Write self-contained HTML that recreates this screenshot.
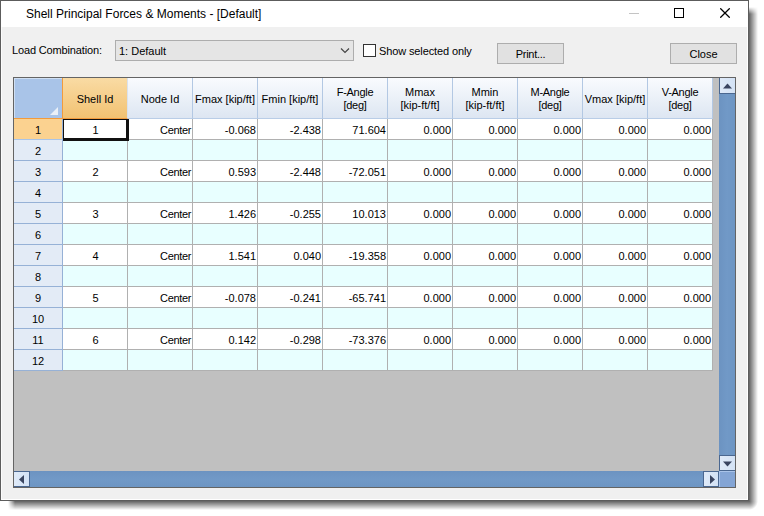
<!DOCTYPE html>
<html><head><meta charset="utf-8">
<style>
*{margin:0;padding:0;box-sizing:border-box}
html,body{width:764px;height:516px;overflow:hidden;background:#fff;font-family:"Liberation Sans",sans-serif;color:#000}
#win{position:absolute;left:0;top:0;width:749px;height:501px;border:1px solid #5c5c5c;background:#f0f0f0;box-shadow:inset 1px 0 0 #fbfbfb,inset -1px -1px 0 #fff;}
#title{position:absolute;left:0;top:0;width:747px;height:26px;background:#fff}
#title .tx{position:absolute;left:25px;top:6px;font-size:12px;line-height:14px;color:#000;white-space:nowrap}
.abs{position:absolute}
.lbl{position:absolute;font-size:11px;line-height:13px;white-space:nowrap}
.btn{position:absolute;border:1px solid #adadad;background:#e1e1e1;font-size:11px;line-height:21px;text-align:center}
#grid{position:absolute;left:13px;top:77px;width:723px;height:411px;border:1px solid #646464;background:#c0c0c0;overflow:hidden}
.g{position:absolute;left:-14px;top:-78px}
.hc{position:absolute;top:78px;width:65px;height:41px;background:linear-gradient(#f9fbfe,#dde6f2);border-right:1px solid #b3c8e3;border-bottom:1px solid #b9cde7;font-size:11px;text-align:center;white-space:nowrap}
.hc.sel{background:linear-gradient(#f9dba4,#f2c272);border-right:1px solid #d9e2ee;border-bottom:1px solid #f29b3c}
.t1{position:absolute;left:0;right:0;top:15px;line-height:13px}
.t2{position:absolute;left:0;right:0;top:8px;line-height:13px}
.corner{position:absolute;left:14px;top:78px;width:49px;height:41px;background:#a9c4e8;box-shadow:inset 1px 1px 0 #cfdff3;border-right:1px solid #f29b3c;border-bottom:1px solid #f29b3c}
.rh{position:absolute;left:14px;width:49px;height:21px;background:#e3ebf6;border-right:1px solid #96b1d6;border-bottom:1px solid #96b1d6;font-size:11px;line-height:22px;text-align:center}
.rh.sel{background:#fbd290;border-bottom-color:#a9c4e8}
.dc{position:absolute;width:65px;height:21px;border-right:1px solid #b0b0b0;border-bottom:1px solid #b0b0b0;font-size:11px;line-height:22px;white-space:nowrap;padding:0 1px 0 2px}
.odd{background:#fff}
.even{background:#e8ffff}
.c{text-align:center}
.r{text-align:right}
#selcell{position:absolute;left:63px;top:119px;width:66px;height:22px;border:1px solid #111;border-right-width:3px;border-bottom-width:3px}
.vsb{position:absolute;left:719px;top:78px;width:16px;height:393px;background:linear-gradient(90deg,#6c93c1,#7199c7 50%,#6d95c3)}
.hsb{position:absolute;left:14px;top:471px;width:705px;height:16px;background:linear-gradient(#6c93c1,#7199c7 50%,#6d95c3)}
.sb{position:absolute;background:linear-gradient(90deg,#dfeaf8,#d3e2f5);border:1px solid #4a6790}
.sbtn{position:absolute;width:15px;height:15px;background:linear-gradient(90deg,#e0ebf9,#c9dbf2);border:1px solid #4d6d9a}
</style></head><body>
<div class="abs" style="left:0;top:501px;width:749px;height:10px;background:linear-gradient(rgba(0,0,0,.62),rgba(0,0,0,0) 9px);-webkit-mask-image:linear-gradient(90deg,transparent 8px,#000 15px)"></div>
<div class="abs" style="left:749px;top:0;width:10px;height:501px;background:linear-gradient(90deg,rgba(0,0,0,.62),rgba(0,0,0,0) 9px);-webkit-mask-image:linear-gradient(transparent 7px,#000 14px)"></div>
<div class="abs" style="left:749px;top:501px;width:10px;height:10px;background:radial-gradient(circle at 0 0,rgba(0,0,0,.62),rgba(0,0,0,0) 9px)"></div>
<div id="win">
 <div id="title"><div class="tx">Shell Principal Forces &amp; Moments - [Default]</div>
  <div class="abs" style="left:628px;top:12px;width:10px;height:1px;background:#c4c4c4"></div>
  <div class="abs" style="left:673px;top:7px;width:10px;height:10px;border:1px solid #000"></div>
  <svg class="abs" style="left:719px;top:7px" width="10" height="10" viewBox="0 0 10 10"><path d="M0.3 0.3L9.7 9.7M9.7 0.3L0.3 9.7" stroke="#000" stroke-width="1.25"/></svg>
 </div>
</div>
<div class="lbl" style="left:12px;top:44px;letter-spacing:-0.15px">Load Combination:</div>
<div class="abs" style="left:115px;top:40px;width:239px;height:21px;border:1px solid #adadad;background:#e5e5e5"></div>
<div class="lbl" style="left:119px;top:45px">1: Default</div>
<svg class="abs" style="left:340px;top:47px" width="11" height="8" viewBox="0 0 11 8"><path d="M1 1.5L5 5.5L9 1.5" fill="none" stroke="#444" stroke-width="1.15"/></svg>
<div class="abs" style="left:363px;top:44px;width:13px;height:13px;border:1px solid #333;background:#fff"></div>
<div class="lbl" style="left:379px;top:45px;letter-spacing:-0.12px">Show selected only</div>
<div class="btn" style="left:497px;top:43px;width:67px;height:21px;letter-spacing:-0.3px">Print...</div>
<div class="btn" style="left:670px;top:43px;width:67px;height:21px">Close</div>
<div id="grid"><div class="g">
<div class="corner"><svg class="abs" style="left:35px;top:28px" width="10" height="10" viewBox="0 0 10 10"><path d="M9 1L9 9L1 9Z" fill="#eaf0f7"/></svg></div>
<div class="hc sel" style="left:63px"><div class="t1">Shell Id</div></div>
<div class="hc" style="left:128px"><div class="t1">Node Id</div></div>
<div class="hc" style="left:193px"><div class="t1">Fmax [kip/ft]</div></div>
<div class="hc" style="left:258px"><div class="t1">Fmin [kip/ft]</div></div>
<div class="hc" style="left:323px;letter-spacing:-0.3px"><div class="t2">F-Angle<br>[deg]</div></div>
<div class="hc" style="left:388px"><div class="t2">Mmax<br>[kip-ft/ft]</div></div>
<div class="hc" style="left:453px"><div class="t2">Mmin<br>[kip-ft/ft]</div></div>
<div class="hc" style="left:518px;letter-spacing:-0.3px"><div class="t2">M-Angle<br>[deg]</div></div>
<div class="hc" style="left:583px"><div class="t1">Vmax [kip/ft]</div></div>
<div class="hc" style="left:648px;letter-spacing:-0.3px"><div class="t2">V-Angle<br>[deg]</div></div>
<div class="rh sel" style="top:119px">1</div>
<div class="dc odd c" style="left:63px;top:119px">1</div>
<div class="dc odd r" style="left:128px;top:119px;letter-spacing:-0.35px">Center</div>
<div class="dc odd r" style="left:193px;top:119px">-0.068</div>
<div class="dc odd r" style="left:258px;top:119px">-2.438</div>
<div class="dc odd r" style="left:323px;top:119px">71.604</div>
<div class="dc odd r" style="left:388px;top:119px">0.000</div>
<div class="dc odd r" style="left:453px;top:119px">0.000</div>
<div class="dc odd r" style="left:518px;top:119px">0.000</div>
<div class="dc odd r" style="left:583px;top:119px">0.000</div>
<div class="dc odd r" style="left:648px;top:119px">0.000</div>
<div class="rh" style="top:140px">2</div>
<div class="dc even c" style="left:63px;top:140px"></div>
<div class="dc even r" style="left:128px;top:140px"></div>
<div class="dc even r" style="left:193px;top:140px"></div>
<div class="dc even r" style="left:258px;top:140px"></div>
<div class="dc even r" style="left:323px;top:140px"></div>
<div class="dc even r" style="left:388px;top:140px"></div>
<div class="dc even r" style="left:453px;top:140px"></div>
<div class="dc even r" style="left:518px;top:140px"></div>
<div class="dc even r" style="left:583px;top:140px"></div>
<div class="dc even r" style="left:648px;top:140px"></div>
<div class="rh" style="top:161px">3</div>
<div class="dc odd c" style="left:63px;top:161px">2</div>
<div class="dc odd r" style="left:128px;top:161px;letter-spacing:-0.35px">Center</div>
<div class="dc odd r" style="left:193px;top:161px">0.593</div>
<div class="dc odd r" style="left:258px;top:161px">-2.448</div>
<div class="dc odd r" style="left:323px;top:161px">-72.051</div>
<div class="dc odd r" style="left:388px;top:161px">0.000</div>
<div class="dc odd r" style="left:453px;top:161px">0.000</div>
<div class="dc odd r" style="left:518px;top:161px">0.000</div>
<div class="dc odd r" style="left:583px;top:161px">0.000</div>
<div class="dc odd r" style="left:648px;top:161px">0.000</div>
<div class="rh" style="top:182px">4</div>
<div class="dc even c" style="left:63px;top:182px"></div>
<div class="dc even r" style="left:128px;top:182px"></div>
<div class="dc even r" style="left:193px;top:182px"></div>
<div class="dc even r" style="left:258px;top:182px"></div>
<div class="dc even r" style="left:323px;top:182px"></div>
<div class="dc even r" style="left:388px;top:182px"></div>
<div class="dc even r" style="left:453px;top:182px"></div>
<div class="dc even r" style="left:518px;top:182px"></div>
<div class="dc even r" style="left:583px;top:182px"></div>
<div class="dc even r" style="left:648px;top:182px"></div>
<div class="rh" style="top:203px">5</div>
<div class="dc odd c" style="left:63px;top:203px">3</div>
<div class="dc odd r" style="left:128px;top:203px;letter-spacing:-0.35px">Center</div>
<div class="dc odd r" style="left:193px;top:203px">1.426</div>
<div class="dc odd r" style="left:258px;top:203px">-0.255</div>
<div class="dc odd r" style="left:323px;top:203px">10.013</div>
<div class="dc odd r" style="left:388px;top:203px">0.000</div>
<div class="dc odd r" style="left:453px;top:203px">0.000</div>
<div class="dc odd r" style="left:518px;top:203px">0.000</div>
<div class="dc odd r" style="left:583px;top:203px">0.000</div>
<div class="dc odd r" style="left:648px;top:203px">0.000</div>
<div class="rh" style="top:224px">6</div>
<div class="dc even c" style="left:63px;top:224px"></div>
<div class="dc even r" style="left:128px;top:224px"></div>
<div class="dc even r" style="left:193px;top:224px"></div>
<div class="dc even r" style="left:258px;top:224px"></div>
<div class="dc even r" style="left:323px;top:224px"></div>
<div class="dc even r" style="left:388px;top:224px"></div>
<div class="dc even r" style="left:453px;top:224px"></div>
<div class="dc even r" style="left:518px;top:224px"></div>
<div class="dc even r" style="left:583px;top:224px"></div>
<div class="dc even r" style="left:648px;top:224px"></div>
<div class="rh" style="top:245px">7</div>
<div class="dc odd c" style="left:63px;top:245px">4</div>
<div class="dc odd r" style="left:128px;top:245px;letter-spacing:-0.35px">Center</div>
<div class="dc odd r" style="left:193px;top:245px">1.541</div>
<div class="dc odd r" style="left:258px;top:245px">0.040</div>
<div class="dc odd r" style="left:323px;top:245px">-19.358</div>
<div class="dc odd r" style="left:388px;top:245px">0.000</div>
<div class="dc odd r" style="left:453px;top:245px">0.000</div>
<div class="dc odd r" style="left:518px;top:245px">0.000</div>
<div class="dc odd r" style="left:583px;top:245px">0.000</div>
<div class="dc odd r" style="left:648px;top:245px">0.000</div>
<div class="rh" style="top:266px">8</div>
<div class="dc even c" style="left:63px;top:266px"></div>
<div class="dc even r" style="left:128px;top:266px"></div>
<div class="dc even r" style="left:193px;top:266px"></div>
<div class="dc even r" style="left:258px;top:266px"></div>
<div class="dc even r" style="left:323px;top:266px"></div>
<div class="dc even r" style="left:388px;top:266px"></div>
<div class="dc even r" style="left:453px;top:266px"></div>
<div class="dc even r" style="left:518px;top:266px"></div>
<div class="dc even r" style="left:583px;top:266px"></div>
<div class="dc even r" style="left:648px;top:266px"></div>
<div class="rh" style="top:287px">9</div>
<div class="dc odd c" style="left:63px;top:287px">5</div>
<div class="dc odd r" style="left:128px;top:287px;letter-spacing:-0.35px">Center</div>
<div class="dc odd r" style="left:193px;top:287px">-0.078</div>
<div class="dc odd r" style="left:258px;top:287px">-0.241</div>
<div class="dc odd r" style="left:323px;top:287px">-65.741</div>
<div class="dc odd r" style="left:388px;top:287px">0.000</div>
<div class="dc odd r" style="left:453px;top:287px">0.000</div>
<div class="dc odd r" style="left:518px;top:287px">0.000</div>
<div class="dc odd r" style="left:583px;top:287px">0.000</div>
<div class="dc odd r" style="left:648px;top:287px">0.000</div>
<div class="rh" style="top:308px">10</div>
<div class="dc even c" style="left:63px;top:308px"></div>
<div class="dc even r" style="left:128px;top:308px"></div>
<div class="dc even r" style="left:193px;top:308px"></div>
<div class="dc even r" style="left:258px;top:308px"></div>
<div class="dc even r" style="left:323px;top:308px"></div>
<div class="dc even r" style="left:388px;top:308px"></div>
<div class="dc even r" style="left:453px;top:308px"></div>
<div class="dc even r" style="left:518px;top:308px"></div>
<div class="dc even r" style="left:583px;top:308px"></div>
<div class="dc even r" style="left:648px;top:308px"></div>
<div class="rh" style="top:329px">11</div>
<div class="dc odd c" style="left:63px;top:329px">6</div>
<div class="dc odd r" style="left:128px;top:329px;letter-spacing:-0.35px">Center</div>
<div class="dc odd r" style="left:193px;top:329px">0.142</div>
<div class="dc odd r" style="left:258px;top:329px">-0.298</div>
<div class="dc odd r" style="left:323px;top:329px">-73.376</div>
<div class="dc odd r" style="left:388px;top:329px">0.000</div>
<div class="dc odd r" style="left:453px;top:329px">0.000</div>
<div class="dc odd r" style="left:518px;top:329px">0.000</div>
<div class="dc odd r" style="left:583px;top:329px">0.000</div>
<div class="dc odd r" style="left:648px;top:329px">0.000</div>
<div class="rh" style="top:350px">12</div>
<div class="dc even c" style="left:63px;top:350px"></div>
<div class="dc even r" style="left:128px;top:350px"></div>
<div class="dc even r" style="left:193px;top:350px"></div>
<div class="dc even r" style="left:258px;top:350px"></div>
<div class="dc even r" style="left:323px;top:350px"></div>
<div class="dc even r" style="left:388px;top:350px"></div>
<div class="dc even r" style="left:453px;top:350px"></div>
<div class="dc even r" style="left:518px;top:350px"></div>
<div class="dc even r" style="left:583px;top:350px"></div>
<div class="dc even r" style="left:648px;top:350px"></div>
<div id="selcell"></div>
<div class="vsb"></div>
<div class="hsb"></div>
<div class="sb" style="left:719px;top:77px;width:17px;height:17px"><svg class="abs" style="left:3px;top:5px" width="10" height="6"><path d="M0 5.5L4.5 0.5L9 5.5Z" fill="#3a4560"/></svg></div>
<div class="sb" style="left:719px;top:455px;width:17px;height:16px"><svg class="abs" style="left:3px;top:5px" width="10" height="6"><path d="M0 0.5L4.5 5.5L9 0.5Z" fill="#3a4560"/></svg></div>
<div class="abs" style="left:719px;top:471px;width:16px;height:16px;background:#84a5d5;box-shadow:inset 1px 1px 0 #a9c3e8"></div>
<div class="sb" style="left:13px;top:471px;width:17px;height:16px"><svg class="abs" style="left:5px;top:3px" width="6" height="10"><path d="M5 0L0 4.5L5 9Z" fill="#3a4560"/></svg></div>
<div class="sb" style="left:703px;top:471px;width:16px;height:16px"><svg class="abs" style="left:6px;top:3px" width="6" height="10"><path d="M0 0L5 4.5L0 9Z" fill="#3a4560"/></svg></div>
</div></div>
</body></html>
